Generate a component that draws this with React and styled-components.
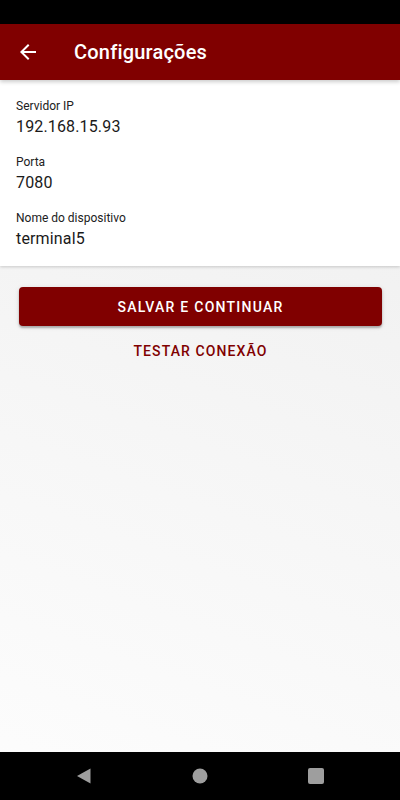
import React from 'react';
import styled, { createGlobalStyle } from 'styled-components';

const GlobalStyle = createGlobalStyle`
    html, body, #root {
        margin: 0;
        padding: 0;
        height: 100%;
    }
    body {
        font-family: Roboto, 'Noto Sans', sans-serif;
        -webkit-font-smoothing: antialiased;
    }
    * { box-sizing: border-box; }`

const Screen = styled.div`
    display: flex;
    flex-direction: column;
    width: 400px;
    height: 800px;
    background: linear-gradient(200deg, #ededed 0%, #f6f6f6 55%, #fdfdfd 100%);`

const StatusBar = styled.div`
    height: 24px;
    background-color: #000;
    flex-shrink: 0;`

const AppBar = styled.header`
    display: flex;
    align-items: center;
    height: 56px;
    padding: 0 16px;
    background-color: #800000;
    color: #fff;
    flex-shrink: 0;
    position: relative;
    z-index: 2;
    box-shadow: 0 2px 4px rgba(0,0,0,0.2);`

const BackButton = styled.button`
    display: flex;
    align-items: center;
    justify-content: center;
    width: 24px;
    height: 24px;
    padding: 0;
    border: 0;
    background: none;
    color: #fff;
    cursor: pointer;`

const Title = styled.h1`
    margin: 0 0 0 34px;
    font-size: 20px;
    font-weight: 500;
    letter-spacing: 0.2px;`

const Card = styled.section`
    display: flex;
    flex-direction: column;
    gap: 16px;
    padding: 18px 16px 16px;
    background-color: #fff;
    box-shadow: 0 1px 3px rgba(0,0,0,0.18);
    position: relative;
    z-index: 1;`

const FieldBox = styled.div`
    display: flex;
    flex-direction: column;
    gap: 2px;`

const Label = styled.span`
    font-size: 12px;
    line-height: 16px;
    color: #212121;`

const Value = styled.span`
    font-size: 16px;
    line-height: 22px;
    letter-spacing: 0.15px;
    color: #1a1a1a;`

const Actions = styled.div`
    display: flex;
    flex-direction: column;
    align-items: center;
    padding: 21px 18px 0 19px;`

const PrimaryButton = styled.button`
    width: 100%;
    height: 39px;
    border: 0;
    border-radius: 4px;
    background-color: #800000;
    color: #fff;
    font-family: Roboto, sans-serif;
    font-size: 14px;
    font-weight: 500;
    letter-spacing: 1.25px;
    text-transform: uppercase;
    box-shadow: 0 2px 2px rgba(0,0,0,0.25), 0 1px 5px rgba(0,0,0,0.12);
    cursor: pointer;`

const TextButton = styled.button`
    margin-top: 7px;
    height: 36px;
    padding: 0 8px;
    border: 0;
    background: none;
    color: #800000;
    font-family: Roboto, sans-serif;
    font-size: 14px;
    font-weight: 500;
    letter-spacing: 1.1px;
    text-transform: uppercase;
    cursor: pointer;`

const Spacer = styled.div`
    flex: 1;`

const NavBar = styled.nav`
    display: flex;
    align-items: center;
    justify-content: center;
    gap: 98px;
    height: 48px;
    background-color: #000;
    flex-shrink: 0;`

const NavIcon = styled.svg`
    width: 18px;
    height: 18px;
    fill: #9e9e9e;`

const fields = [
    { label: 'Servidor IP', value: '192.168.15.93' },
    { label: 'Porta', value: '7080' },
    { label: 'Nome do dispositivo', value: 'terminal5' },
];

const App = () => {
    return (
    <Screen>
        <GlobalStyle />
        <StatusBar />
        <AppBar>
            <BackButton aria-label="Voltar">
                <svg width="24" height="24" viewBox="0 0 24 24">
                    <path d="M20 11H7.83l5.59-5.59L12 4l-8 8 8 8 1.41-1.41L7.83 13H20v-2z" fill="#fff" />
                </svg>
            </BackButton>
            <Title>Configurações</Title>
        </AppBar>

        <Card>
            {fields.map(f => (
                <FieldBox key={f.label}>
                    <Label>{f.label}</Label>
                    <Value>{f.value}</Value>
                </FieldBox>
            ))}
        </Card>

        <Actions>
            <PrimaryButton>Salvar e continuar</PrimaryButton>
            <TextButton>Testar conexão</TextButton>
        </Actions>

        <Spacer />

        <NavBar>
            <NavIcon viewBox="0 0 18 18">
                <path d="M15.5 1.5v15L2 9z" />
            </NavIcon>
            <NavIcon viewBox="0 0 18 18">
                <circle cx="9" cy="9" r="7.5" />
            </NavIcon>
            <NavIcon viewBox="0 0 18 18">
                <rect x="1" y="1" width="16" height="16" rx="2" />
            </NavIcon>
        </NavBar>
    </Screen>
    );
}

export default App;
